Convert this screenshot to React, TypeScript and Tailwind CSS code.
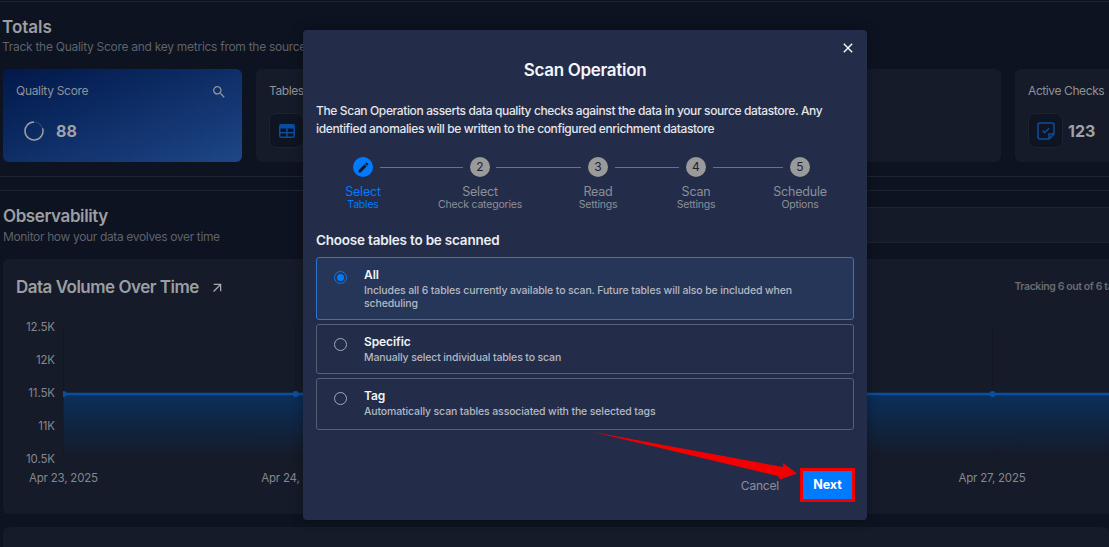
import React from 'react';
import { MdClose, MdEdit, MdSearch, MdArrowOutward } from 'react-icons/md';

const steps = [
  { n: 1, title: 'Select', sub: 'Tables', line: 'w-[83px] mx-[7px]' },
  { n: 2, title: 'Select', sub: 'Check categories', line: 'w-[85px] ml-[6px] mr-[7px]' },
  { n: 3, title: 'Read', sub: 'Settings', line: 'w-[64px] mx-[7px]' },
  { n: 4, title: 'Scan', sub: 'Settings', line: 'w-[70px] ml-[7px] mr-[7px]' },
  { n: 5, title: 'Schedule', sub: 'Options', line: '' },
];

const options = [
  {
    title: 'All',
    text: 'Includes all 6 tables currently available to scan. Future tables will also be included when scheduling',
    active: true,
    height: 'h-[63px]',
  },
  { title: 'Specific', text: 'Manually select individual tables to scan', active: false, height: 'h-[50px]' },
  { title: 'Tag', text: 'Automatically scan tables associated with the selected tags', active: false, height: 'h-[52px]' },
];

const yLabels = ['12.5K', '12K', '11.5K', '11K', '10.5K'];
const xLabels = ['Apr 23, 2025', 'Apr 24, 2025', 'Apr 25, 2025', 'Apr 26, 2025', 'Apr 27, 2025'];
const pointXs = [0.5, 232.75, 465, 697.25, 929.5];

function TableIcon() {
  return (
    <svg width="16" height="14" viewBox="0 0 16 14" fill="none">
      <rect x="0.75" y="0.75" width="14.5" height="12.5" rx="1.5" stroke="#0a4f9e" strokeWidth="1.5" />
      <path d="M1 1h14v3.5H1z" fill="#0a4f9e" />
      <path d="M8 4v9M1 8.7h14" stroke="#0a4f9e" strokeWidth="1.5" />
    </svg>
  );
}

function CheckNoteIcon() {
  return (
    <svg width="18" height="18" viewBox="0 0 18 18" fill="none">
      <path
        d="M3 1h12a2 2 0 0 1 2 2v9l-5 5H3a2 2 0 0 1-2-2V3a2 2 0 0 1 2-2z"
        stroke="#0a4f9e"
        strokeWidth="1.5"
      />
      <path d="M12 17v-5h5" stroke="#0a4f9e" strokeWidth="1.5" />
      <path d="M5.5 8.5l2.2 2.2 4.4-4.4" stroke="#0a4f9e" strokeWidth="1.5" />
    </svg>
  );
}

function StatCard({ title, icon, value }: { title?: string; icon?: React.ReactNode; value?: string }) {
  return (
    <div className="h-[93px] w-[239px] shrink-0 rounded-md bg-[#151b29] pl-[13px] pt-[13px]">
      {title && <div className="text-[12px] leading-[18px] tracking-[-0.4px] text-[#8f9297]">{title}</div>}
      {icon && (
        <div className="mt-[13px] flex items-center gap-[5px]">
          <div className="flex h-[35px] w-[35px] items-center justify-center rounded-lg border border-[#1c2231] bg-[#0e1421]">
            {icon}
          </div>
          {value && <span className="text-[16px] font-bold text-[#a0a2a6]">{value}</span>}
        </div>
      )}
    </div>
  );
}

function Stepper() {
  return (
    <div className="ml-[37px] mt-[19px] flex h-[55px] items-start">
      {steps.map((s) => (
        <React.Fragment key={s.n}>
          <div className="flex w-5 flex-col items-center">
            <div
              className={
                s.n === 1
                  ? 'flex h-5 w-5 items-center justify-center rounded-full bg-[#007aff] text-[#10182c]'
                  : 'flex h-5 w-5 items-center justify-center rounded-full bg-[#9a9a9a] text-[12px] text-[#1c2233]'
              }
            >
              {s.n === 1 ? <MdEdit size={13} /> : s.n}
            </div>
            <div
              className={
                s.n === 1
                  ? 'mt-[8px] whitespace-nowrap text-[12.5px] leading-[14px] tracking-[-0.2px] text-[#007aff]'
                  : 'mt-[8px] whitespace-nowrap text-[12.5px] leading-[14px] tracking-[-0.2px] text-[#8b8f99]'
              }
            >
              {s.title}
            </div>
            <div
              className={
                s.n === 1
                  ? 'whitespace-nowrap text-[10.5px] leading-[11px] tracking-[-0.2px] text-[#007aff]'
                  : 'whitespace-nowrap text-[10.5px] leading-[11px] tracking-[-0.2px] text-[#8b8f99]'
              }
            >
              {s.sub}
            </div>
          </div>
          {s.line && <div className={`mt-[10px] h-px bg-[#6b7285] ${s.line}`} />}
        </React.Fragment>
      ))}
    </div>
  );
}

function OptionCard({ title, text, active, height }: (typeof options)[number]) {
  return (
    <div
      className={
        active
          ? `flex rounded-[3px] border border-[#2f74d0] bg-[#253658] pl-[17px] ${height}`
          : `flex rounded-[3px] border border-[#596073] pl-[17px] ${height}`
      }
    >
      <div className="flex h-full w-[13px] shrink-0 items-start">
        {active ? (
          <div className="mt-[13px] flex h-[13px] w-[13px] items-center justify-center rounded-full border border-[#007aff]">
            <div className="h-[7px] w-[7px] rounded-full bg-[#007aff]" />
          </div>
        ) : (
          <div className="mt-[13px] h-[13px] w-[13px] rounded-full border border-[#a5a9b3]" />
        )}
      </div>
      <div className="ml-[17px] pt-[8px]">
        <div className="text-[12px] font-semibold leading-[18px] tracking-[-0.1px] text-[#f1f2f4]">{title}</div>
        <div className="mt-px w-[450px] text-[10.5px] font-medium leading-[12.5px] tracking-[-0.13px] text-[#b4b8c2]">{text}</div>
      </div>
    </div>
  );
}

function ScanModal() {
  return (
    <div className="absolute left-[303px] top-[30px] h-[490px] w-[564px] rounded-[4px] bg-[#232d4a] px-[13px] pt-[29px] shadow-[0_0_12px_rgba(0,0,0,0.35)]">
      <button className="absolute right-[11px] top-[10px] text-white">
        <MdClose size={16} />
      </button>
      <h2 className="text-center text-[17px] font-semibold leading-[22px] tracking-[-0.3px] text-[#f4f5f7]">Scan Operation</h2>
      <p className="mt-[21px] text-[12px] font-medium leading-[18px] tracking-[-0.37px] text-[#e4e6ea]">
        The Scan Operation asserts data quality checks against the data in your source datastore. Any identified
        anomalies will be written to the configured enrichment datastore
      </p>
      <Stepper />
      <div className="mt-[19px] text-[13.5px] font-semibold leading-[18px] tracking-[-0.2px] text-[#eceef1]">Choose tables to be scanned</div>
      <div className="mt-[8px] flex flex-col gap-[4px]">
        {options.map((o) => (
          <OptionCard key={o.title} {...o} />
        ))}
      </div>
      <div className="-mr-px mt-[38px] flex items-center justify-end gap-[21px]">
        <span className="mt-px text-[12px] tracking-[-0.2px] text-[#8b8f99]">Cancel</span>
        <button className="flex h-[34px] w-[55px] items-center justify-center border-[3px] border-[#f00000] bg-[#007aff] text-[12.5px] font-bold tracking-[-0.1px] text-white">
          Next
        </button>
      </div>
    </div>
  );
}

function VolumeChart() {
  return (
    <div className="mt-[18px]">
      <div className="flex h-[152px]">
        <div className="flex w-[52px] shrink-0 flex-col justify-between text-right text-[11.5px] leading-[20px] tracking-[-0.1px] text-[#85878c]">
          {yLabels.map((l) => (
            <span key={l}>{l}</span>
          ))}
        </div>
        <svg className="ml-[8px] mt-[10px] shrink-0" width="1083" height="136" viewBox="0 0 1083 136" fill="none">
          <defs>
            <linearGradient id="volumeFill" x1="0" y1="0" x2="0" y2="1">
              <stop offset="0" stopColor="#0b2f5c" />
              <stop offset="1" stopColor="#151b29" />
            </linearGradient>
          </defs>
          {pointXs.map((x) => (
            <line key={x} x1={x} x2={x} y1="0" y2="130" stroke="#121722" />
          ))}
          <rect x="0.5" y="67" width="1083" height="60" fill="url(#volumeFill)" />
          <line x1="0.5" x2="1083" y1="67" y2="67" stroke="#0a4f9e" strokeWidth="2.5" />
          {pointXs.map((x) => (
            <circle key={x} cx={x} cy="67" r="3" fill="#0a4f9e" />
          ))}
        </svg>
      </div>
      <div className="mt-[1px] flex gap-[164.25px] pl-[26px] text-[11.5px] leading-[16px] tracking-[-0.2px] text-[#85878c]">
        {xLabels.map((l) => (
          <span key={l} className="w-[68px] shrink-0 whitespace-nowrap text-center">
            {l}
          </span>
        ))}
      </div>
    </div>
  );
}

export default function App() {
  return (
    <div
      className="relative h-[547px] w-full overflow-hidden bg-[#0d1320]"
      style={{ fontFamily: 'Inter, "Noto Sans", sans-serif' }}
    >
      <div className="mt-px border-t border-[#1d2333] pl-[3px] pt-[13px]">
        <h1 className="-ml-px text-[17px] font-semibold leading-[24px] text-[#9c9ea2]">Totals</h1>
        <p className="-ml-px text-[12px] leading-[16px] tracking-[-0.28px] text-[#5d626c]">Track the Quality Score and key metrics from the source</p>

        <div className="mt-[14px] flex gap-[14px]">
          <div className="h-[93px] w-[239px] shrink-0 rounded-md bg-gradient-to-br from-[#03184a] to-[#1e4687] px-[13px] pt-[12px]">
            <div className="flex items-center justify-between text-[#8f9297]">
              <span className="text-[12px] leading-[18px] tracking-[-0.3px]">Quality Score</span>
              <MdSearch size={16} className="mr-[2px] mt-[3px]" />
            </div>
            <div className="ml-[8px] mt-[19px] flex items-center gap-[12px]">
              <svg width="20" height="20" viewBox="0 0 20 20" fill="none">
                <circle cx="10" cy="10" r="9" stroke="#1d3f75" strokeWidth="1.5" />
                <path d="M10 1a9 9 0 1 0 8.6 6.4" stroke="#9a9ca0" strokeWidth="1.5" />
              </svg>
              <span className="text-[16px] font-bold text-[#a0a2a6]">88</span>
            </div>
          </div>
          <StatCard title="Tables" icon={<TableIcon />} />
          <StatCard />
          <StatCard />
          <StatCard title="Active Checks" icon={<CheckNoteIcon />} value="123" />
        </div>
      </div>

      <div className="mt-[14px] h-px bg-[#1d2333]" />
      <div className="mt-[13px] h-px bg-[#1d2333]" />

      <div className="flex h-[68px] pl-[3px]">
        <div className="w-[400px] shrink-0 pt-[13px]">
          <h2 className="text-[17px] font-semibold leading-[24px] tracking-[-0.4px] text-[#9c9ea2]">Observability</h2>
          <p className="mt-px text-[12px] leading-[16px] tracking-[-0.35px] text-[#5d626c]">Monitor how your data evolves over time</p>
        </div>
        <div className="mt-[16px] h-[36px] grow border-y border-[#1d2333] bg-[#141a28]" />
      </div>

      <div className="ml-[3px] h-[255px] w-[1143px] overflow-hidden rounded-md bg-[#151b29] pt-[16px]">
        <div className="flex items-center justify-between px-[13px]">
          <div className="flex items-center gap-[11px]">
            <span className="text-[17px] font-semibold leading-[24px] tracking-[-0.5px] text-[#9c9ea2]">Data Volume Over Time</span>
            <MdArrowOutward size={15} className="text-[#a8aaae]" />
          </div>
          <span className="text-[10.5px] font-semibold tracking-[-0.4px] text-[#696c73]">Tracking 6 out of 6 tables</span>
        </div>
        <VolumeChart />
      </div>

      <div className="ml-[3px] mt-[13px] h-[40px] rounded-md bg-[#151b29]" />

      <ScanModal />

      {/* annotation arrow pointing at the Next button */}
      <svg className="pointer-events-none absolute left-0 top-0" width="1109" height="547" fill="none">
        <path d="M593 432 L783 467 L783 463 L797 473.5 L780 479.5 L778 476 Z" fill="#f00000" />
      </svg>
    </div>
  );
}
